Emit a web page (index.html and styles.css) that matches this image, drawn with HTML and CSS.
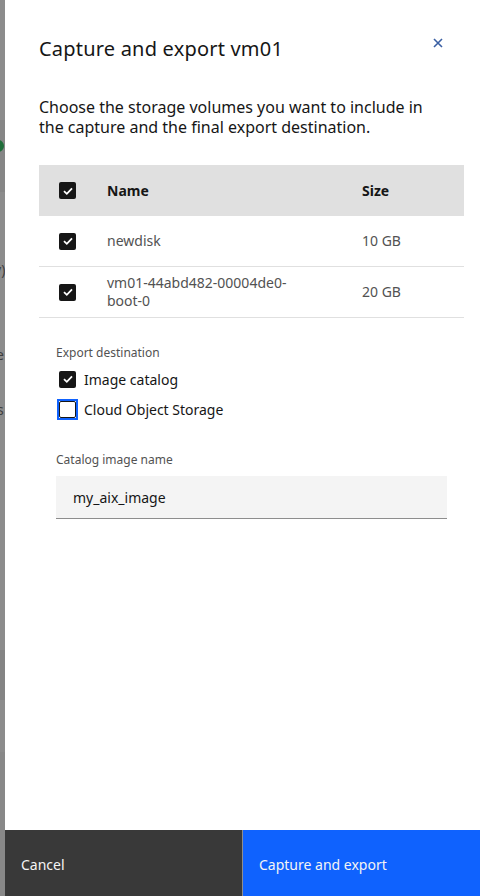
FILE: index.html
```html
<!DOCTYPE html>
<html lang="en">
<head>
<meta charset="utf-8">
<title>Capture and export vm01</title>
<link rel="stylesheet" href="styles.css">
</head>
<body>
<div class="backdrop">
  <div class="band b1"></div>
  <div class="band b2"><span class="status-dot"></span></div>
  <div class="band b3"><span class="peek p1">y)</span><span class="peek p2">e</span><span class="peek p3">s</span></div>
  <div class="band b4"></div>
  <div class="band b5"></div>
  <div class="band b6"></div>
</div>
<div class="modal">
  <div class="modal-body">
    <div class="modal-header">
      <h2 class="title">Capture and export vm01</h2>
      <button class="close" aria-label="Close">
        <svg width="10" height="10" viewBox="0 0 10 10"><path d="M1 1 L9 9 M9 1 L1 9" stroke="#3a5fa3" stroke-width="1.6" fill="none"/></svg>
      </button>
    </div>
    <p class="intro">Choose the storage volumes you want to include in the capture and the final export destination.</p>

    <div class="table">
      <div class="row head">
        <div class="cell check"><span class="cb on"><svg viewBox="0 0 16 16"><path d="M4 8.2 L6.8 10.8 L12 5.4" stroke="#fff" stroke-width="1.8" fill="none"/></svg></span></div>
        <div class="cell name">Name</div>
        <div class="cell size">Size</div>
      </div>
      <div class="row">
        <div class="cell check"><span class="cb on"><svg viewBox="0 0 16 16"><path d="M4 8.2 L6.8 10.8 L12 5.4" stroke="#fff" stroke-width="1.8" fill="none"/></svg></span></div>
        <div class="cell name"><span class="name-text">newdisk</span></div>
        <div class="cell size">10 GB</div>
      </div>
      <div class="row">
        <div class="cell check"><span class="cb on"><svg viewBox="0 0 16 16"><path d="M4 8.2 L6.8 10.8 L12 5.4" stroke="#fff" stroke-width="1.8" fill="none"/></svg></span></div>
        <div class="cell name"><span class="name-text">vm01-44abd482-00004de0-boot-0</span></div>
        <div class="cell size">20 GB</div>
      </div>
    </div>

    <div class="dest" role="group">
      <div class="label">Export destination</div>
      <label class="option">
        <span class="cb-wrap"><span class="cb on"><svg viewBox="0 0 16 16"><path d="M4 8.2 L6.8 10.8 L12 5.4" stroke="#fff" stroke-width="1.8" fill="none"/></svg></span></span>
        <span>Image catalog</span>
      </label>
      <label class="option">
        <span class="cb-wrap focus"><span class="cb off"></span></span>
        <span>Cloud Object Storage</span>
      </label>
    </div>

    <div class="field">
      <div class="label">Catalog image name</div>
      <div class="input">my_aix_image</div>
    </div>
  </div>
  <div class="footer">
    <button class="btn secondary">Cancel</button>
    <button class="btn primary">Capture and export</button>
  </div>
</div>
</body>
</html>
```

FILE: styles.css
```css
* { box-sizing: border-box; }
html, body { margin: 0; padding: 0; }
body {
  width: 480px;
  height: 896px;
  overflow: hidden;
  display: flex;
  font-family: "Noto Sans", "Open Sans", sans-serif;
  color: #161616;
  background: #fff;
}

.backdrop {
  width: 5px;
  flex: none;
  display: flex;
  flex-direction: column;
  overflow: hidden;
  background: #8c8c8c;
}
.band { background: #8c8c8c; position: relative; }
.b1 { height: 120px; }
.b2 { height: 72px; background: #868686; }
.b3 { height: 458px; }
.b4 { height: 50px; background: #848484; }
.b5 { height: 52px; }
.b6 { flex: 1; background: #888888; }
.status-dot {
  position: absolute;
  left: -8px;
  top: 20px;
  width: 12px;
  height: 12px;
  border-radius: 50%;
  background: #1f6e3a;
}
.peek {
  position: absolute;
  font-size: 14px;
  line-height: 16px;
  color: #3e3e3e;
}
.p1 { top: 70px; left: -6px; }
.p2 { top: 155px; left: -4px; }
.p3 { top: 210px; left: -3px; }

.modal {
  flex: 1;
  display: flex;
  flex-direction: column;
  background: #fff;
}
.modal-body {
  flex: 1;
  padding: 35px 16px 0 34px;
}
.modal-header {
  display: flex;
  justify-content: space-between;
  align-items: flex-start;
}
.title {
  margin: 0;
  font-size: 20px;
  line-height: 28px;
  font-weight: 400;
  letter-spacing: 0.2px;
  color: #161616;
}
.close {
  border: 0;
  background: none;
  padding: 0;
  margin: 3px 21px 0 0;
  width: 10px;
  height: 10px;
  display: flex;
}
.intro {
  margin: 34px 0 28px;
  font-size: 16px;
  line-height: 20px;
  color: #161616;
  padding-right: 20px;
}

.table { width: 425px; }
.row {
  display: grid;
  grid-template-columns: 68px 255px 1fr;
  align-items: center;
  min-height: 51px;
  border-bottom: 1px solid #e0e0e0;
  font-size: 14px;
  line-height: 18px;
  color: #525252;
}
.row.head {
  background: #e0e0e0;
  border-bottom: 0;
  font-weight: 700;
  color: #161616;
}
.cell.check { padding-left: 20px; display: flex; }
.cell.name { padding: 7px 0; }
.name-text { display: block; max-width: 200px; }

.cb {
  width: 17px;
  height: 17px;
  border-radius: 2px;
  display: flex;
  align-items: center;
  justify-content: center;
}
.cb svg { width: 16px; height: 16px; }
.cb.on { background: #161616; }
.cb.off { border: 1px solid #161616; background: #fff; }

.dest {
  padding: 27px 0 0 17px;
}
.label {
  font-size: 12px;
  line-height: 16px;
  color: #525252;
  margin-bottom: 3px;
}
.option {
  display: flex;
  align-items: center;
  gap: 6px;
  height: 30px;
  font-size: 14px;
  color: #161616;
}
.cb-wrap {
  width: 21px;
  height: 21px;
  display: flex;
  align-items: center;
  justify-content: center;
  margin-left: 1px;
  border: 2px solid transparent;
}
.cb-wrap.focus { border-color: #0f62fe; }

.field {
  padding: 28px 0 0 17px;
}
.field .label { margin-bottom: 8px; }
.input {
  width: 391px;
  height: 43px;
  background: #f4f4f4;
  border-bottom: 1px solid #8d8d8d;
  padding: 0 17px;
  display: flex;
  align-items: center;
  font-size: 14px;
  color: #161616;
}

.footer {
  height: 66px;
  display: grid;
  grid-template-columns: 1fr 1fr;
  gap: 1px;
  background: #8d8d8d;
}
.btn {
  border: 0;
  margin: 0;
  text-align: left;
  font-family: inherit;
  font-size: 14px;
  line-height: 18px;
  padding: 26px 16px 0;
  display: flex;
  align-items: flex-start;
}
.btn.secondary { background: #393939; color: #f4f4f4; }
.btn.primary { background: #0f62fe; color: #f4f4f4; }
```
